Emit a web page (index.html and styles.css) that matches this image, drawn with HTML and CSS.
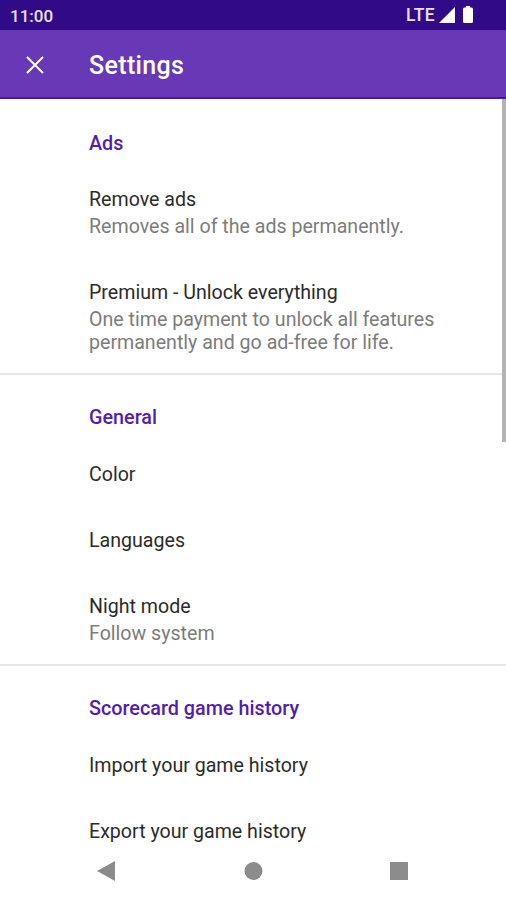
FILE: index.html
```html
<!DOCTYPE html>
<html lang="en">
<head>
<meta charset="utf-8">
<title>Settings</title>
<link rel="stylesheet" href="styles.css">
</head>
<body>
<div class="screen">
  <header class="status">
    <span class="time">11:00</span>
    <span class="network">LTE</span>
    <svg class="signal" width="16" height="16" viewBox="0 0 16 16"><path d="M16 0v16H0z"/></svg>
    <svg class="battery" width="10" height="17" viewBox="0 0 10 17"><path d="M3 0h4v1.5h1.500a1.500 1.500 0 0 1 1.500 1.500v12.500a1.500 1.500 0 0 1-1.500 1.500h-7a1.500 1.500 0 0 1-1.500-1.500V3a1.500 1.500 0 0 1 1.500-1.500H3z"/></svg>
  </header>
  <div class="toolbar">
    <svg class="close" width="18" height="18" viewBox="0 0 18 18"><path d="M1 1l16 16M17 1L1 17"/></svg>
    <h1>Settings</h1>
  </div>
  <main class="content">
    <section class="ads">
      <h2><span>Ads</span></h2>
      <div class="item double"><p class="title"><span>Remove ads</span></p><p class="summary"><span>Removes all of the ads permanently.</span></p></div>
      <div class="item"><p class="title"><span>Premium - Unlock everything</span></p><p class="summary"><span>One time payment to unlock all features</span><br><span>permanently and go ad-free for life.</span></p></div>
    </section>
    <section class="general">
      <h2><span>General</span></h2>
      <div class="item"><p class="title"><span>Color</span></p></div>
      <div class="item"><p class="title"><span>Languages</span></p></div>
      <div class="item double"><p class="title"><span>Night mode</span></p><p class="summary"><span>Follow system</span></p></div>
    </section>
    <section class="history">
      <h2><span>Scorecard game history</span></h2>
      <div class="item"><p class="title"><span>Import your game history</span></p></div>
      <div class="item"><p class="title"><span>Export your game history</span></p></div>
    </section>
    <div class="scrollbar"></div>
  </main>
  <nav class="navigation">
    <svg width="20" height="20" viewBox="0 0 20 20"><path d="M19 0v20L1 10z"/></svg>
    <svg width="20" height="20" viewBox="0 0 20 20"><circle cx="10.500" cy="10" r="9"/></svg>
    <svg width="20" height="20" viewBox="0 0 20 20"><rect x="1" y="1" width="18" height="18" rx=".5"/></svg>
  </nav>
</div>
</body>
</html>
```
FILE: styles.css
```css
* { box-sizing: border-box; margin: 0; padding: 0; }
body { background: #fff; font-family: Roboto, sans-serif; color: #2b2b2b; }
.screen { width: 506px; height: 900px; display: flex; flex-direction: column; overflow: hidden; }
.status { height: 30px; background: #310a87; color: #e9e0fa; display: flex; align-items: center; padding: 1px 33px 0 10px; font-size: 17px; font-weight: 500; }
.network { margin-left: auto; margin-right: 4px; font-size: 17.5px; letter-spacing: .4px; margin-top: -1px; }
.signal { margin-right: 8px; }
.status svg { fill: #fff; position: relative; top: -1px; }
.toolbar { height: 69px; background: #6739b7; border-bottom: 2px solid #4b16a2; display: flex; align-items: center; padding: 2px 0 0 26px; color: #fff; }
.close { stroke: #fff; stroke-width: 2; fill: none; }
h1 { font-size: 25px; font-weight: 500; line-height: 30px; letter-spacing: .35px; margin: 3px 0 0 45px; }
.content { flex: none; height: 745px; position: relative; overflow: hidden; }
section { padding: 10px 0 0 89px; border-bottom: 2px solid #e6e6e6; }
.ads { height: 276px; padding-top: 12px; }
.general { height: 291px; }
.history { border: 0; }
h2 { height: 56px; padding-top: 21px; font-size: 19.8px; line-height: 24px; font-weight: 500; color: #531db0; }
.ads h2 { height: 55px; }
.item { height: 66px; padding-top: 21px; }
.double { height: 93px; }
.title { font-size: 19.6px; line-height: 26px; }
.summary { font-size: 19.6px; line-height: 23px; color: #7c7c7c; padding-top: 2px; }
.scrollbar { position: absolute; top: 0; right: 0; width: 4.5px; height: 343px; background: #b3b3b3; }
.navigation { height: 56px; display: flex; justify-content: space-between; align-items: center; padding: 0 97px 2px 96px; }
.navigation svg { fill: #8c8c8c; }
```
